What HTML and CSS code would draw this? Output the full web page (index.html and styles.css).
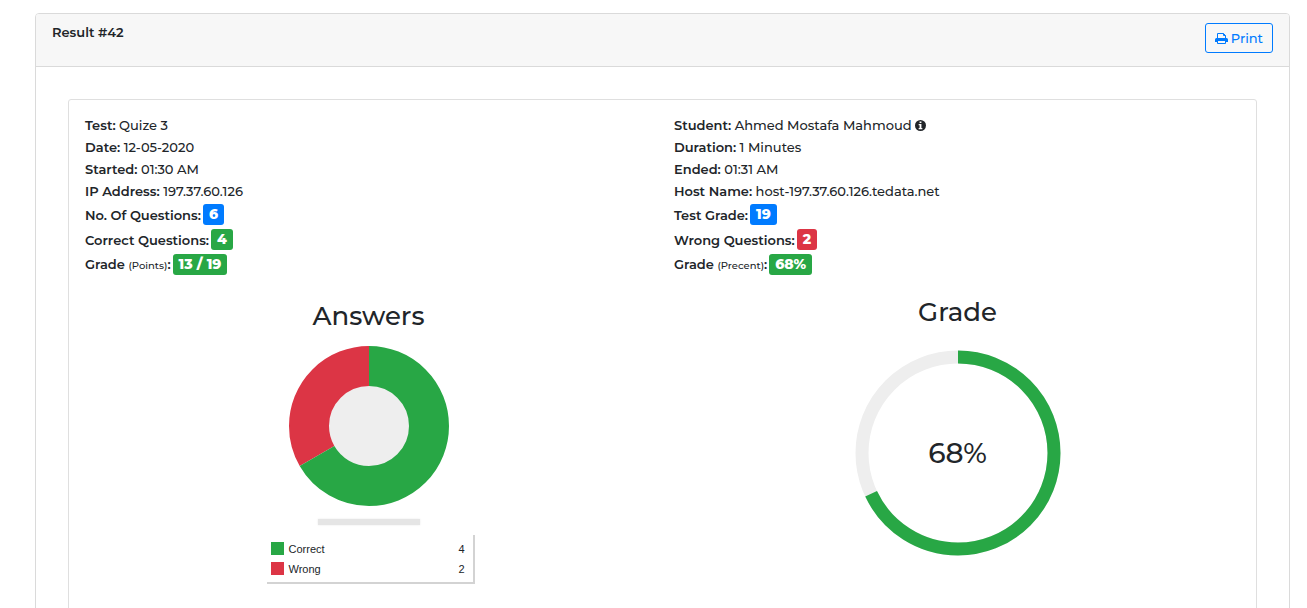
FILE: index.html
```html
<!DOCTYPE html>
<html lang="en">
<head>
<meta charset="utf-8">
<meta name="viewport" content="width=device-width, initial-scale=1">
<title>Result #42</title>
<link rel="stylesheet" href="styles.css">
</head>
<body>
<main class="page">
  <section class="card">
    <header class="card-header">
      <h1 class="card-title">Result #42</h1>
      <button class="print-button" type="button">
        <svg class="print-icon" viewBox="0 0 13 13" aria-hidden="true"><path fill="none" stroke="currentColor" d="M2.500 7V1.500H8.500L10.500 3.500V7M8.500 1.500V3.500H10.500M2.500 9V11.500H10.500V9"/><path fill="currentColor" d="M1.500 6h10Q13 6 13 7.500V10h-2V9H2v1H0V7.500Q0 6 1.500 6"/></svg>
        Print
      </button>
    </header>
    <div class="card-body">
      <div class="summary">
        <div class="column">
          <ul class="facts">
            <li><b>Test:</b> Quize 3</li>
            <li><b>Date:</b> 12-05-2020</li>
            <li><b>Started:</b> 01:30 AM</li>
            <li><b>IP Address:</b> 197.37.60.126</li>
            <li class="badge-row"><b>No. Of Questions:</b> <span class="badge blue">6</span></li>
            <li class="badge-row"><b>Correct Questions:</b> <span class="badge green">4</span></li>
            <li class="badge-row"><b>Grade <small>(Points)</small>:</b> <span class="badge green">13 / 19</span></li>
          </ul>
          <div class="answers">
            <h2 class="chart-title">Answers</h2>
            <svg class="donut" viewBox="0 0 160 160" role="img" aria-label="4 correct, 2 wrong">
              <circle cx="80" cy="80" r="41" fill="#eee"/>
              <g fill="none" stroke-width="40" transform="rotate(-90 80 80)">
                <circle cx="80" cy="80" r="60" stroke="#dc3545" pathLength="6" stroke-dasharray="2 4" stroke-dashoffset="-4"/>
                <circle cx="80" cy="80" r="60" stroke="#28a745" pathLength="6" stroke-dasharray="4 2"/>
              </g>
            </svg>
            <div class="donut-shadow"></div>
            <table class="legend">
              <tr><th scope="row"><span class="swatch green"></span>Correct</th><td>4</td></tr>
              <tr><th scope="row"><span class="swatch red"></span>Wrong</th><td>2</td></tr>
            </table>
          </div>
        </div>
        <div class="column">
          <ul class="facts">
            <li><b>Student:</b> Ahmed Mostafa Mahmoud <svg class="info-icon" viewBox="0 0 12 12" aria-hidden="true"><circle cx="6" cy="6" r="6" fill="currentColor"/><path fill="#fff" d="M5 1.500h2v1.700H5zM4 4.300h3v4.300h1V10H4V8.600h1V5.600H4z"/></svg></li>
            <li><b>Duration:</b> 1 Minutes</li>
            <li><b>Ended:</b> 01:31 AM</li>
            <li><b>Host Name:</b> host-197.37.60.126.tedata.net</li>
            <li class="badge-row"><b>Test Grade:</b> <span class="badge blue">19</span></li>
            <li class="badge-row"><b>Wrong Questions:</b> <span class="badge red">2</span></li>
            <li class="badge-row"><b>Grade <small>(Precent)</small>:</b> <span class="badge green">68%</span></li>
          </ul>
          <div class="grade">
            <h2 class="chart-title">Grade</h2>
            <div class="ring">
              <svg class="ring-chart" viewBox="0 0 206 206" aria-hidden="true">
                <g fill="none" stroke-width="13" transform="rotate(-90 103 103)">
                  <circle cx="103" cy="103" r="96" stroke="#eee"/>
                  <circle cx="103" cy="103" r="96" stroke="#28a745" pathLength="100" stroke-dasharray="68 32"/>
                </g>
              </svg>
              <span class="ring-value">68%</span>
            </div>
          </div>
        </div>
      </div>
    </div>
  </section>
</main>
</body>
</html>
```
FILE: styles.css
```css
* {
  box-sizing: border-box;
}

body {
  margin: 0;
  background: #fff;
  color: #212529;
  font: 13px/22px Montserrat, Inter, sans-serif;
}

.page {
  height: 100vh;
  overflow: hidden;
  padding: 13px 17px 0 35px;
}

.card {
  border: 1px solid #dadada;
  border-radius: 4px;
}

.card-header {
  display: flex;
  justify-content: space-between;
  align-items: flex-start;
  padding: 9px 16px 13px;
  background: #f7f7f7;
  border-bottom: 1px solid #dadada;
  border-radius: 3px 3px 0 0;
}

.card-title {
  margin: 0;
  font-size: 13px;
  font-weight: 600;
  line-height: 18px;
}

.print-button {
  display: flex;
  align-items: center;
  gap: 3px;
  height: 30px;
  padding: 0 9px;
  border: 1px solid #007bff;
  border-radius: 3px;
  background: transparent;
  color: #007bff;
  font: inherit;
  font-weight: 500;
}

.print-icon {
  width: 13px;
  height: 13px;
}

.card-body {
  padding: 32px;
}

.summary {
  display: grid;
  grid-template-columns: 1fr 1fr;
  gap: 22px;
  padding: 14px 15px 32px 16px;
  border: 1px solid #dfdfdf;
  border-radius: 3px;
}

.facts {
  margin: 0;
  padding: 0;
  list-style: none;
  font-weight: 500;
}

.facts b {
  font-weight: 600;
}

.facts small {
  font-size: 10px;
  font-weight: 500;
}

.badge-row {
  display: flex;
  align-items: center;
  gap: 2px;
  height: 25px;
}

.badge {
  padding: 0 6px;
  border-radius: 3px;
  color: #fff;
  font-size: 14px;
  font-weight: 800;
  line-height: 21px;
}

.blue {
  background: #007bff;
}

.green {
  background: #28a745;
}

.red {
  background: #dc3545;
}

.info-icon {
  width: 11px;
  height: 11px;
  vertical-align: -1px;
}

.chart-title {
  margin: 0;
  font-size: 26px;
  font-weight: 500;
  line-height: 32px;
}

.answers,
.grade {
  display: flex;
  flex-direction: column;
  align-items: center;
}

.answers {
  padding-top: 23px;
}

.grade {
  gap: 22px;
  padding-top: 19px;
}

.donut {
  width: 160px;
  height: 160px;
  margin-top: 14px;
}

.donut-shadow {
  width: 102px;
  height: 6px;
  margin: 13px 0 8px;
  background: #e5e5e5;
  box-shadow: 0 0 2px #e5e5e5;
}

.legend {
  width: 208px;
  padding: 6px 8px 3px 6px;
  border-spacing: 0;
  box-shadow: 2px 2px 0 #d3d3d3;
  font: 11px/20px "Liberation Sans", Arial, sans-serif;
}

.legend th,
.legend td {
  padding: 0;
  font-weight: 400;
  text-align: left;
}

.legend td {
  text-align: right;
}

.swatch {
  display: inline-block;
  width: 13px;
  height: 13px;
  margin-right: 5px;
  vertical-align: -2px;
}

.ring {
  display: grid;
  place-items: center;
}

.ring-chart,
.ring-value {
  grid-area: 1 / 1;
}

.ring-chart {
  width: 206px;
  height: 206px;
}

.ring-value {
  font-size: 28px;
  font-weight: 500;
  line-height: 32px;
}
```
